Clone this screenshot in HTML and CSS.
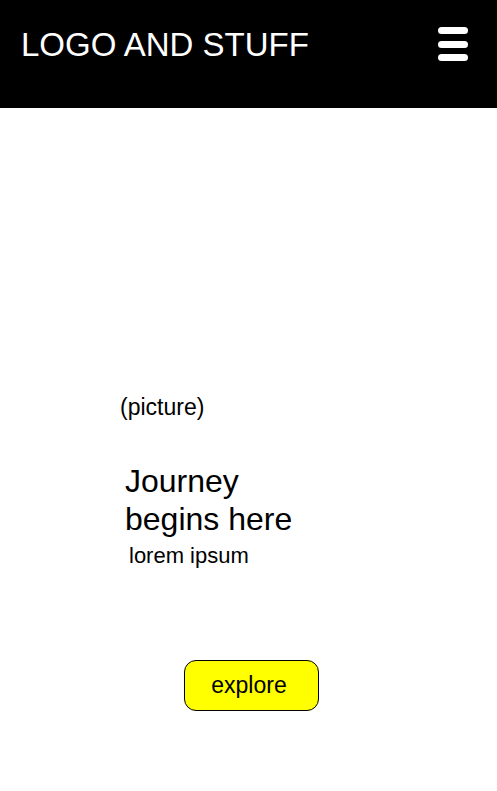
FILE: index.html
```html
<!DOCTYPE html>
<html lang="en">
<head>
<meta charset="utf-8">
<title>Journey</title>
<link rel="stylesheet" href="styles.css">
</head>
<body>
<header class="topbar">
  <div class="logo">LOGO AND STUFF</div>
  <button class="menu" aria-label="Menu">
    <span class="bar"></span>
    <span class="bar"></span>
    <span class="bar"></span>
  </button>
</header>
<main class="hero">
  <div class="picture">(picture)</div>
  <h1 class="headline">Journey<br>begins here</h1>
  <p class="sub">lorem ipsum</p>
  <div class="actions">
    <button class="explore">explore</button>
  </div>
</main>
</body>
</html>
```
FILE: styles.css
```css
* { box-sizing: border-box; }
html, body {
  margin: 0;
  padding: 0;
  background: #fff;
  font-family: "Liberation Sans", Arial, sans-serif;
  color: #000;
}
.topbar {
  height: 108px;
  background: #000;
  display: flex;
  justify-content: space-between;
  align-items: flex-start;
  padding: 26px 28px 0 21px;
}
.logo {
  color: #fff;
  font-size: 33px;
  line-height: 37px;
}
.menu {
  background: none;
  border: 0;
  padding: 0;
  margin-top: 1px;
  display: flex;
  flex-direction: column;
  gap: 6.5px;
  width: 31px;
}
.bar {
  display: block;
  width: 30px;
  height: 7px;
  background: #fff;
  border-radius: 4px;
}
.hero {
  padding-top: 286px;
}
.picture {
  font-size: 23px;
  line-height: 26px;
  padding-left: 120px;
}
.headline {
  margin: 42px 0 0;
  padding-left: 125px;
  font-size: 32px;
  font-weight: normal;
  line-height: 38px;
}
.sub {
  margin: 5px 0 0;
  padding-left: 129px;
  font-size: 22px;
  line-height: 25px;
}
.actions {
  padding-left: 184px;
  margin-top: 92px;
}
.explore {
  width: 135px;
  height: 51px;
  background: #ffff00;
  border: 1px solid #000;
  border-radius: 12px;
  font-family: "Liberation Sans", Arial, sans-serif;
  font-size: 23px;
  color: #000;
  padding: 0 5px 0 0;
}
```
